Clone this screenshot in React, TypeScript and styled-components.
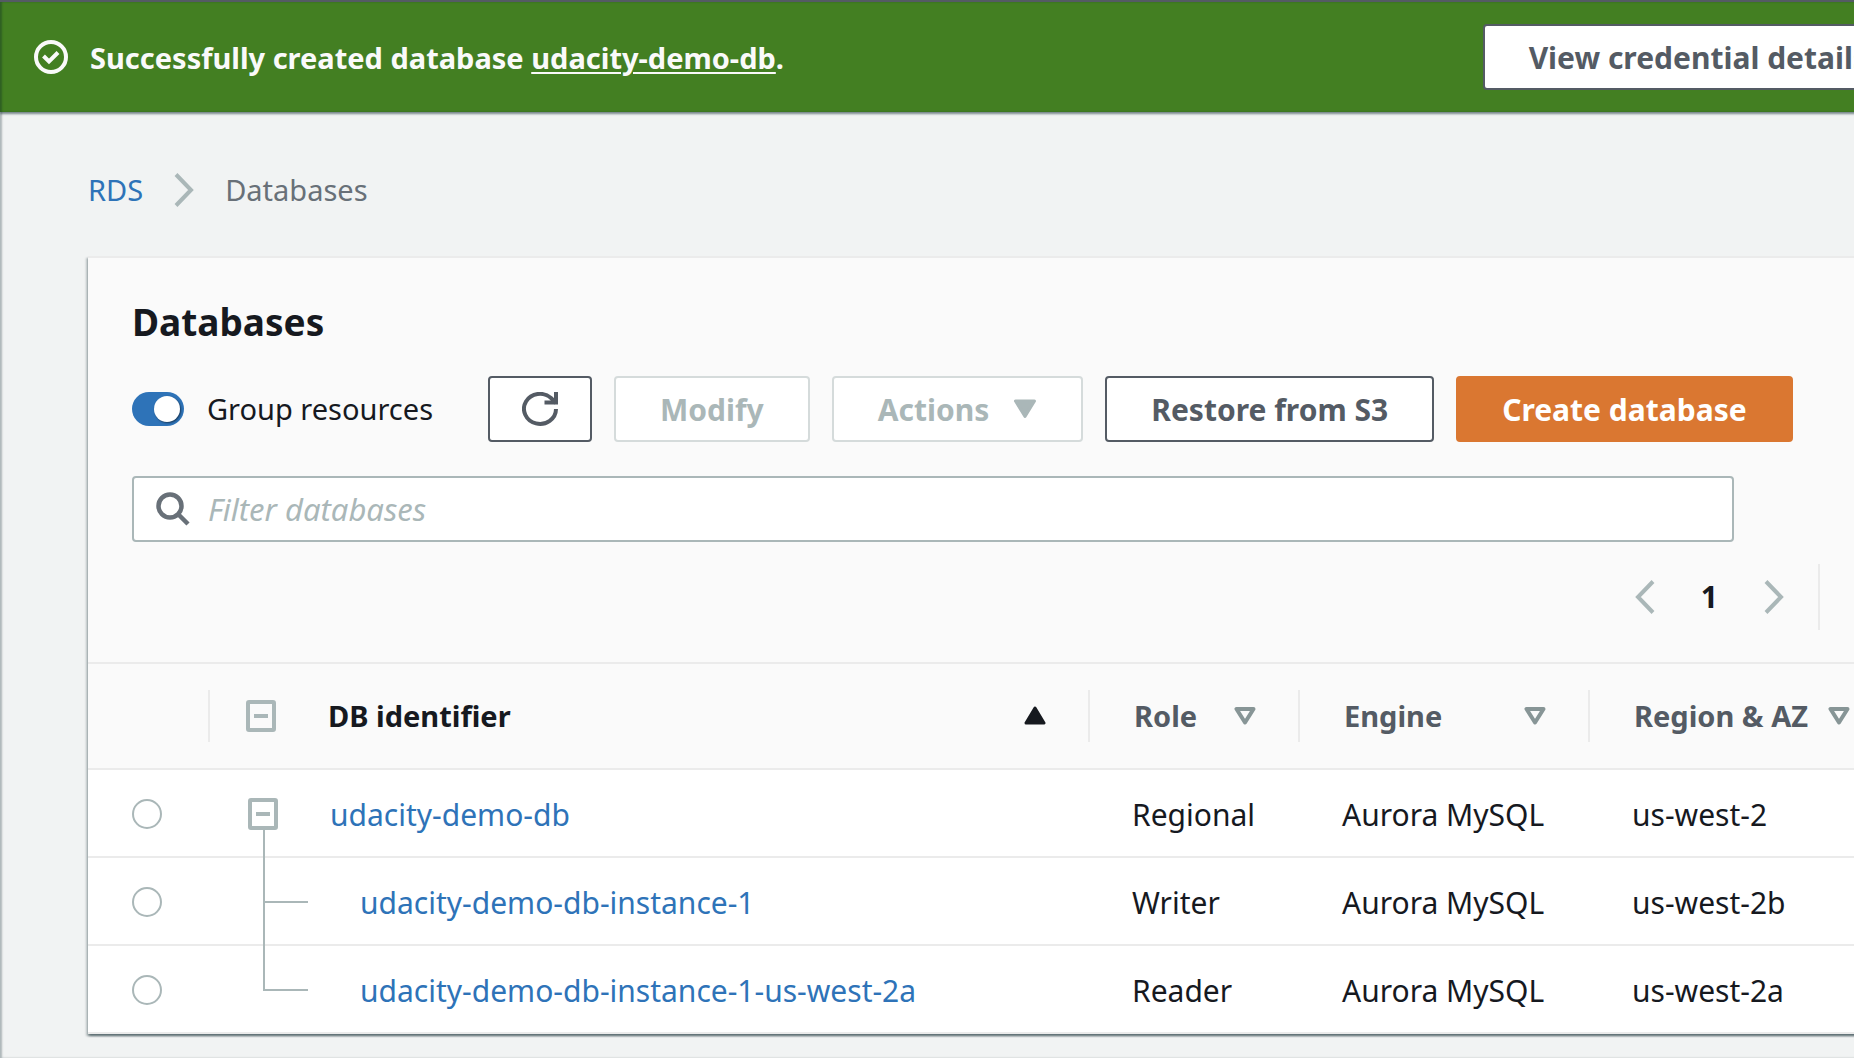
import React, { useState } from "react";
import styled, { createGlobalStyle, css } from "styled-components";

const color = {
  link: "#2e73b8",
  ink: "#16191f",
  slate: "#545b64",
  muted: "#687078",
  soft: "#aab7b8",
  faint: "#d5dbdb",
  line: "#ebebeb",
  panel: "#fafafa",
};

const raised = css`
  box-shadow:
    0 2px 2px 0 rgba(0, 28, 36, 0.4),
    2px 2px 2px 0 rgba(0, 28, 36, 0.2),
    -2px 2px 2px 0 rgba(0, 28, 36, 0.2);
`;

const GlobalStyle = createGlobalStyle`
  *, *::before, *::after { box-sizing: border-box; }
  html, body { margin: 0; }
  body {
    background: #f1f3f3;
    color: ${color.ink};
    font-family: "Noto Sans", "Open Sans", sans-serif;
    font-size: 30px;
    line-height: 40px;
    overflow: hidden;
  }
  button, input { font: inherit; color: inherit; margin: 0; }
`;

const Page = styled.div`
  min-height: 100vh;
  border-top: 2px solid ${color.slate};
  box-shadow: inset 2px 0 2px rgba(0, 28, 36, 0.28);
  overflow: hidden;
`;

const Banner = styled.div`
  display: flex;
  align-items: center;
  gap: 22px;
  height: 110px;
  margin-right: -88px;
  padding: 0 28px 0 34px;
  background: #437f22;
  color: #fafafa;
  font-size: 29px;
  font-weight: 700;
  box-shadow: 0 2px 2px rgba(0, 28, 36, 0.5), inset 2px 0 2px rgba(0, 28, 36, 0.3);
`;

const BannerText = styled.p`
  flex: 1;
  margin: 0;
  padding-top: 2px;
`;

const BannerLink = styled.a`
  color: inherit;
  text-decoration: underline;
  text-decoration-thickness: 2px;
  text-underline-offset: 3px;
`;

type Tone = "normal" | "disabled" | "primary";

const tones = {
  normal: css`
    border-color: ${color.slate};
    background: #fff;
    color: ${color.slate};
  `,
  disabled: css`
    border-color: ${color.faint};
    background: #fff;
    color: ${color.soft};
  `,
  primary: css`
    border-color: #da7731;
    background: #da7731;
    color: #fff;
  `,
};

const Button = styled.button<{ $tone?: Tone; $icon?: boolean }>`
  display: flex;
  flex: none;
  align-items: center;
  justify-content: center;
  gap: 24px;
  height: 66px;
  padding: ${(p) => (p.$icon ? "0 32px" : "2px 44px 0")};
  border: 2px solid;
  border-radius: 4px;
  font-size: 30px;
  font-weight: 700;
  white-space: nowrap;
  ${(p) => tones[p.$tone ?? "normal"]}
`;

const Crumbs = styled.nav`
  display: flex;
  align-items: center;
  gap: 31px;
  padding: 58px 88px 46px;
  color: ${color.muted};
  font-size: 29px;
`;

const Link = styled.a`
  color: ${color.link};
  text-decoration: none;
`;

const Panel = styled.section`
  margin: 0 -40px 24px 88px;
  border-top: 2px solid ${color.line};
  background: ${color.panel};
  ${raised}
`;

const PanelHead = styled.header`
  padding: 40px 44px 32px;
  border-bottom: 2px solid ${color.line};
`;

const Title = styled.h1`
  margin: 0 0 30px;
  font-size: 37px;
  line-height: 48px;
  font-weight: 700;
`;

const Toolbar = styled.div`
  display: flex;
  align-items: center;
  gap: 22px;
`;

const SwitchLabel = styled.label`
  display: flex;
  align-items: center;
  gap: 23px;
  width: 334px;
  font-size: 29px;
  white-space: nowrap;
`;

const Switch = styled.input`
  appearance: none;
  flex: none;
  display: flex;
  align-items: center;
  justify-content: flex-start;
  width: 52px;
  height: 34px;
  padding: 0 4px;
  border-radius: 17px;
  background: ${color.muted};
  &::before {
    content: "";
    width: 26px;
    height: 26px;
    border-radius: 50%;
    background: #fff;
    box-shadow: 1px 1px 2px rgba(0, 0, 0, 0.5);
  }
  &:checked {
    justify-content: flex-end;
    background: ${color.link};
  }
`;

const Filter = styled.label`
  display: flex;
  align-items: center;
  gap: 18px;
  height: 66px;
  margin: 34px 116px 22px 0;
  padding: 0 22px;
  border: 2px solid ${color.soft};
  border-radius: 4px;
  background: #fff;
`;

const FilterInput = styled.input`
  flex: 1;
  padding: 0;
  border: 0;
  outline: 0;
  background: none;
  font-size: 31px;
  &::placeholder {
    color: ${color.soft};
    font-style: italic;
    opacity: 1;
  }
`;

const Pager = styled.div`
  display: flex;
  align-items: center;
  justify-content: flex-end;
  gap: 46px;
  height: 66px;
  margin-right: 30px;
  padding-right: 34px;
  border-right: 2px solid ${color.line};
  font-weight: 700;
`;

const PlainButton = styled.button`
  display: flex;
  flex: none;
  padding: 0;
  border: 0;
  background: none;
`;

const Table = styled.table`
  width: 100%;
  border-collapse: separate;
  border-spacing: 0;
  table-layout: fixed;
  text-align: left;
  white-space: nowrap;
`;

const Col = styled.col<{ $w?: number }>`
  ${(p) => p.$w && css`width: ${p.$w}px;`}
`;

const Th = styled.th`
  height: 106px;
  padding: 0;
  border-bottom: 2px solid ${color.line};
  font-size: 29px;
  color: ${color.slate};
`;

const HeadCell = styled.div<{ $sorted?: boolean; $flush?: boolean }>`
  display: flex;
  align-items: center;
  height: 52px;
  gap: ${(p) => (p.$flush ? 52 : 16)}px;
  padding-left: ${(p) => (p.$flush ? 36 : 44)}px;
  padding-right: 42px;
  border-right: 2px solid ${color.line};
  color: ${(p) => (p.$sorted ? color.ink : color.slate)};
  & > span { flex: 1; }
`;

const Td = styled.td<{ $flush?: boolean }>`
  height: 88px;
  padding: ${(p) => (p.$flush ? "0" : "2px 0 0 42px")};
  background: #fff;
  box-shadow: inset 0 -2px ${color.line};
`;

const Radio = styled.input`
  appearance: none;
  display: block;
  width: 30px;
  height: 30px;
  margin-left: 44px;
  border: 2px solid ${color.soft};
  border-radius: 50%;
  background: #fff;
  &:checked { border: 9px solid ${color.link}; }
`;

const Identifier = styled.div`
  display: flex;
  align-items: center;
  height: 88px;
  padding-left: 38px;
  gap: 50px;
  & > a { padding-top: 2px; }
`;

const Drawing = styled.svg`
  display: block;
  flex: none;
`;

const SuccessIcon = () => (
  <Drawing width="34" height="34" viewBox="0 0 34 34" fill="none" stroke="#fafafa" strokeWidth="4" aria-hidden>
    <circle cx="17" cy="17" r="15" />
    <path d="M9.500 16l5.500 5.500L24 12.500" />
  </Drawing>
);

const Chevron = ({ back }: { back?: boolean }) => (
  <Drawing width="20" height="34" viewBox="0 0 20 34" fill="none" stroke={color.soft} strokeWidth="4" aria-hidden>
    <path d={back ? "M18 1.500L3 17l15 15.500" : "M2 1.500L17 17 2 32.500"} />
  </Drawing>
);

const RefreshIcon = () => (
  <Drawing width="36" height="34" viewBox="0 0 36 34" fill="none" stroke={color.slate} strokeWidth="4" aria-hidden>
    <path d="M34 17a16 15 0 1 1-5-11l5 5" />
    <path d="M34 0v10.500H22.500" />
  </Drawing>
);

const SearchIcon = () => (
  <Drawing width="34" height="34" viewBox="0 0 34 34" fill="none" stroke={color.muted} strokeWidth="4.500" aria-hidden>
    <circle cx="14" cy="14" r="11.500" />
    <path d="M22 22l10 10" />
  </Drawing>
);

const CaretDown = () => (
  <Drawing width="24" height="22" viewBox="0 0 24 22" aria-hidden>
    <path d="M2.500 2h19L12 17.500z" fill={color.soft} stroke={color.soft} strokeWidth="3" strokeLinejoin="round" />
  </Drawing>
);

const SortIcon = ({ sorted }: { sorted?: boolean }) => (
  <Drawing width="22" height="20" viewBox="0 0 22 20" strokeLinejoin="round" aria-hidden>
    {sorted ? (
      <path d="M2 17L11 2l9 15z" fill={color.ink} stroke={color.ink} strokeWidth="3" />
    ) : (
      <path d="M2.500 3h17L11 16.500z" fill="none" stroke="#879596" strokeWidth="4" />
    )}
  </Drawing>
);

const CollapseIcon = () => (
  <Drawing width="30" height="32" viewBox="0 0 30 32" fill="none" stroke={color.soft} strokeWidth="4" aria-hidden>
    <rect x="2" y="2" width="26" height="28" rx="1" />
    <path d="M8 16h14" />
  </Drawing>
);

const TreeRoot = () => (
  <Drawing width="32" height="88" viewBox="0 0 32 88" fill="none" stroke={color.soft} strokeWidth="4" aria-hidden>
    <rect x="2" y="30" width="26" height="28" rx="1" />
    <path d="M8 44h14" />
    <path d="M16 60v28" strokeWidth="2" />
  </Drawing>
);

const TreeBranch = ({ last }: { last?: boolean }) => (
  <Drawing width="62" height="88" viewBox="0 0 62 88" fill="none" stroke={color.soft} strokeWidth="2" aria-hidden>
    <path d={last ? "M16 0v44h44" : "M16 0v88M16 44h44"} />
  </Drawing>
);

const rows = [
  { id: "udacity-demo-db", role: "Regional", engine: "Aurora MySQL", region: "us-west-2" },
  { id: "udacity-demo-db-instance-1", role: "Writer", engine: "Aurora MySQL", region: "us-west-2b" },
  { id: "udacity-demo-db-instance-1-us-west-2a", role: "Reader", engine: "Aurora MySQL", region: "us-west-2a" },
];

export default function App() {
  const [grouped, setGrouped] = useState(true);
  const [query, setQuery] = useState("");

  return (
    <>
      <GlobalStyle />
      <Page>
        <Banner role="status">
          <SuccessIcon />
          <BannerText>
            Successfully created database <BannerLink href="#db">udacity-demo-db</BannerLink>.
          </BannerText>
          <Button>View credential details</Button>
        </Banner>

        <Crumbs aria-label="Breadcrumb">
          <Link href="#rds">RDS</Link>
          <Chevron />
          <span>Databases</span>
        </Crumbs>

        <Panel>
          <PanelHead>
            <Title>Databases</Title>
            <Toolbar>
              <SwitchLabel>
                <Switch
                  type="checkbox"
                  role="switch"
                  checked={grouped}
                  onChange={(e) => setGrouped(e.target.checked)}
                />
                Group resources
              </SwitchLabel>
              <Button $icon aria-label="Refresh">
                <RefreshIcon />
              </Button>
              <Button $tone="disabled" disabled>Modify</Button>
              <Button $tone="disabled" disabled>
                Actions
                <CaretDown />
              </Button>
              <Button>Restore from S3</Button>
              <Button $tone="primary">Create database</Button>
            </Toolbar>
            <Filter>
              <SearchIcon />
              <FilterInput
                type="text"
                aria-label="Filter databases"
                placeholder="Filter databases"
                value={query}
                onChange={(e) => setQuery(e.target.value)}
              />
            </Filter>
            <Pager>
              <PlainButton aria-label="Previous page"><Chevron back /></PlainButton>
              <span>1</span>
              <PlainButton aria-label="Next page"><Chevron /></PlainButton>
            </Pager>
          </PanelHead>

          <Table>
            <colgroup>
              <Col $w={122} />
              <Col $w={880} />
              <Col $w={210} />
              <Col $w={290} />
              <Col />
            </colgroup>
            <thead>
              <tr>
                <Th><HeadCell /></Th>
                <Th>
                  <HeadCell $sorted $flush>
                    <PlainButton aria-label="Collapse all"><CollapseIcon /></PlainButton>
                    <span>DB identifier</span>
                    <SortIcon sorted />
                  </HeadCell>
                </Th>
                <Th><HeadCell><span>Role</span><SortIcon /></HeadCell></Th>
                <Th><HeadCell><span>Engine</span><SortIcon /></HeadCell></Th>
                <Th><HeadCell><span>Region &amp; AZ</span><SortIcon /></HeadCell></Th>
              </tr>
            </thead>
            <tbody>
              {rows.map((row, i) => (
                <tr key={row.id}>
                  <Td $flush><Radio type="radio" name="database" aria-label={row.id} /></Td>
                  <Td $flush>
                    <Identifier>
                      {i === 0 ? <TreeRoot /> : <TreeBranch last={i === rows.length - 1} />}
                      <Link href={"#" + row.id}>{row.id}</Link>
                    </Identifier>
                  </Td>
                  <Td>{row.role}</Td>
                  <Td>{row.engine}</Td>
                  <Td>{row.region}</Td>
                </tr>
              ))}
            </tbody>
          </Table>
        </Panel>
      </Page>
    </>
  );
}
